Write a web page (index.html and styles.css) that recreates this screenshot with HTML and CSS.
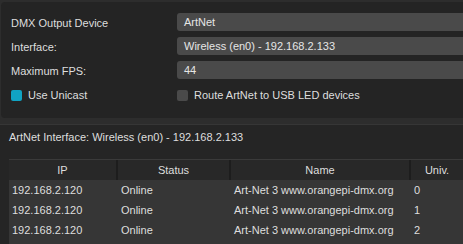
FILE: index.html
```html
<!DOCTYPE html>
<html lang="en">
<head>
    <meta charset="UTF-8">
    <title>DMX Output</title>
    <link rel="stylesheet" href="styles.css">
</head>
<body>
    <div class="settings-panel">
        <div class="form-row">
            <span class="form-label">DMX Output Device</span>
            <div class="field">ArtNet</div>
        </div>
        <div class="form-row">
            <span class="form-label">Interface:</span>
            <div class="field">Wireless (en0) - 192.168.2.133</div>
        </div>
        <div class="form-row">
            <span class="form-label">Maximum FPS:</span>
            <div class="field">44</div>
        </div>
        <div class="check-row">
            <label class="check"><span class="box box-on"></span>Use Unicast</label>
            <label class="check"><span class="box"></span>Route ArtNet to USB LED devices</label>
        </div>
    </div>
    <div class="nodes-panel">
        <div class="nodes-title">ArtNet Interface: Wireless (en0) - 192.168.2.133</div>
        <div class="nodes">
            <div class="nodes-head">
                <div class="head-cell">IP</div>
                <div class="head-cell">Status</div>
                <div class="head-cell">Name</div>
                <div class="head-cell">Univ.</div>
            </div>
            <div class="nodes-row"><span>192.168.2.120</span><span>Online</span><span>Art-Net 3 www.orangepi-dmx.org</span><span>0</span></div>
            <div class="nodes-row"><span>192.168.2.120</span><span>Online</span><span>Art-Net 3 www.orangepi-dmx.org</span><span>1</span></div>
            <div class="nodes-row"><span>192.168.2.120</span><span>Online</span><span>Art-Net 3 www.orangepi-dmx.org</span><span>2</span></div>
        </div>
    </div>
</body>
</html>
```

FILE: styles.css
```css
html, body {
    margin: 0;
    height: 100%;
    overflow: hidden;
    background-color: #2d2d2d;
    font-family: "Liberation Sans", Arial, sans-serif;
    font-size: 11px;
    color: #dedede;
}
.settings-panel {
    margin: 2px 0 0 1px;
    height: 116px;
    box-sizing: border-box;
    padding: 11px 0 0 10px;
    background-color: #242424;
    border-radius: 4px 0 0 4px;
}
.form-row {
    display: grid;
    grid-template-columns: 166px 1fr;
    align-items: center;
    margin-bottom: 6px;
}
.form-label {
    padding-top: 1px;
}
.field {
    height: 18px;
    line-height: 19px;
    padding-left: 7px;
    background-color: #4a4a4a;
    border-radius: 3px 0 0 3px;
    color: #e6e6e6;
}
.check-row {
    display: grid;
    grid-template-columns: 166px 1fr;
    margin-top: 10px;
}
.check {
    display: flex;
    align-items: center;
    gap: 6px;
}
.box {
    width: 11px;
    height: 11px;
    border-radius: 2px;
    background-color: #4a4a4a;
}
.box-on {
    background-color: #10a3c3;
}
.nodes-panel {
    margin-top: 6px;
    height: 120px;
    padding: 5px 0 0 9px;
    box-sizing: border-box;
    background-color: #252525;
    border-top: 1px solid #363636;
}
.nodes-title {
    height: 14px;
    line-height: 14px;
}
.nodes {
    margin-top: 15px;
    width: 456px;
    height: 85px;
    background-color: #363636;
}
.nodes-head,
.nodes-row {
    display: grid;
    grid-template-columns: 109px 113px 180px 54px;
}
.nodes-head {
    height: 21px;
    border-top: 1px solid #3a3a3a;
    box-sizing: border-box;
}
.head-cell {
    line-height: 20px;
    text-align: center;
    background-color: #282828;
    border-right: 2px solid #1d1d1d;
}
.nodes-row {
    height: 20px;
    line-height: 21px;
    white-space: nowrap;
}
.nodes-row span {
    padding-left: 3px;
}
```
